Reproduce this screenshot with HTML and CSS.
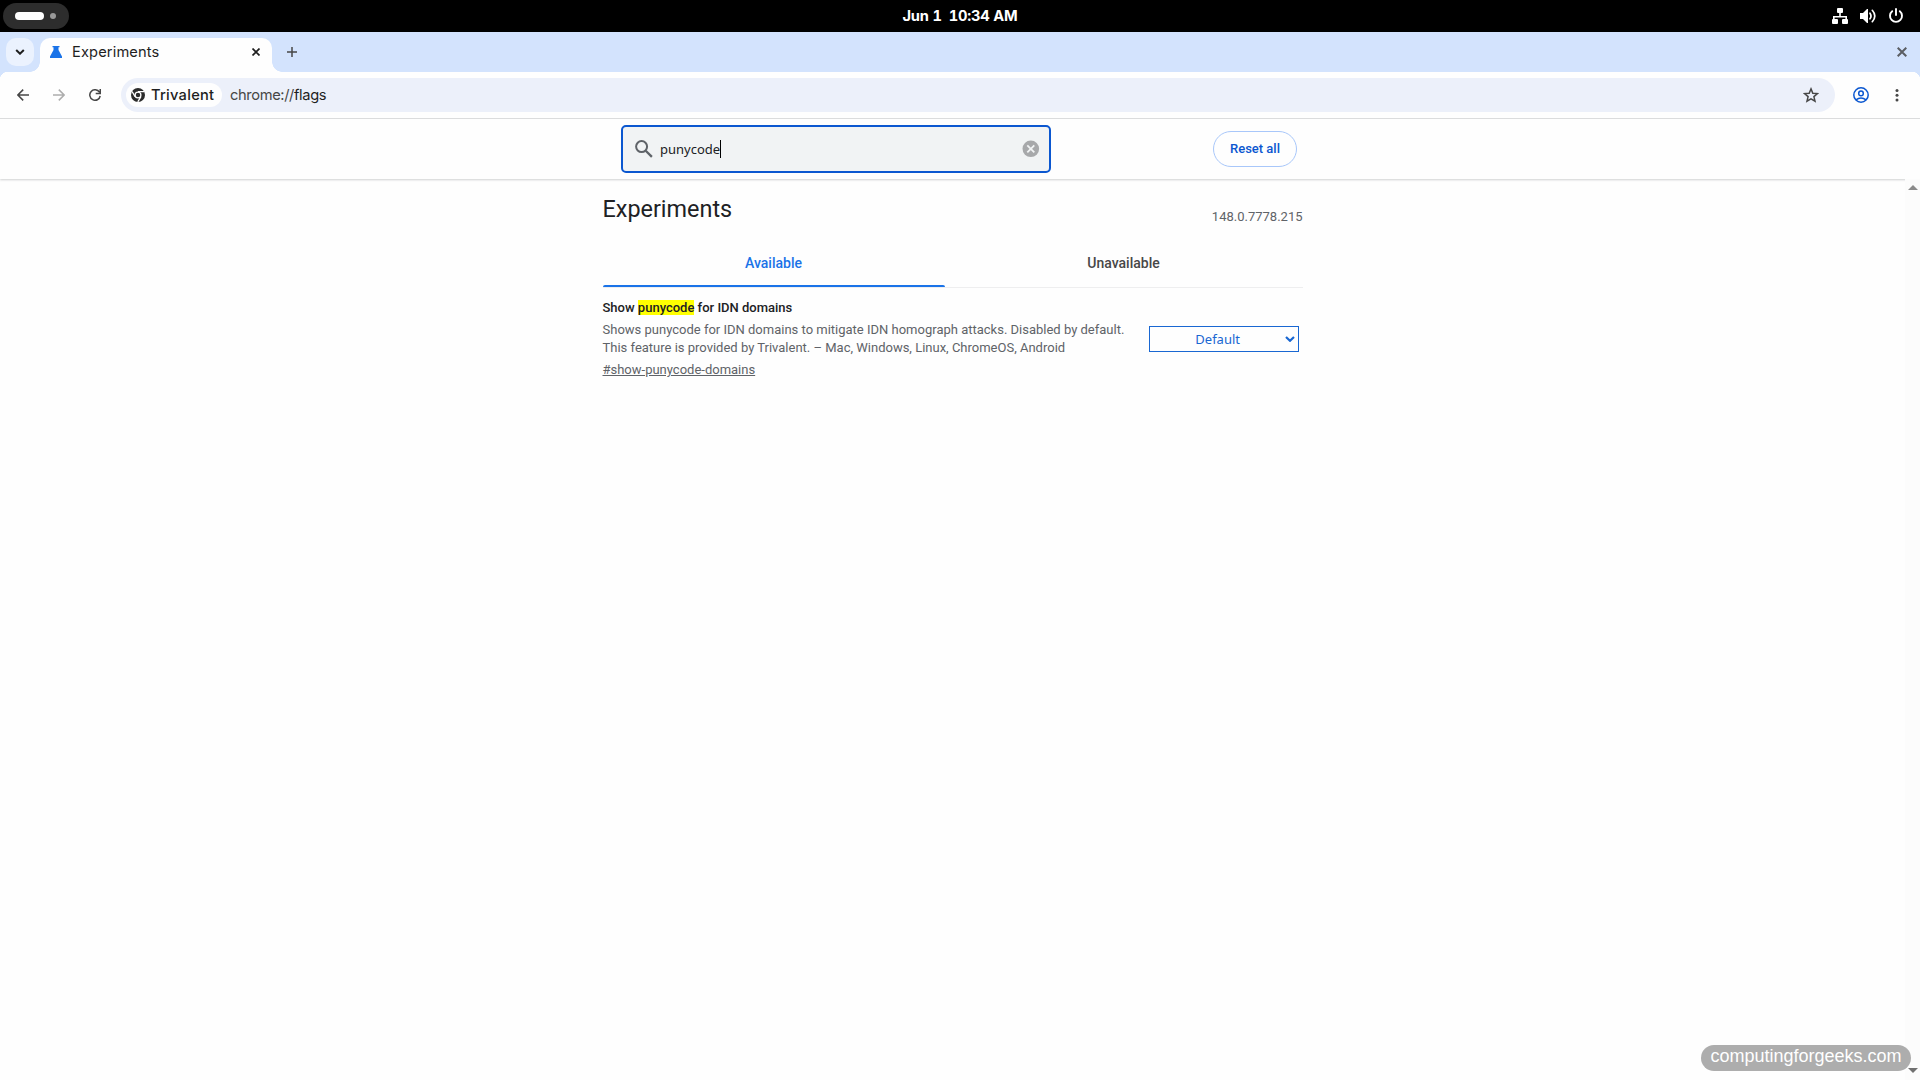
FILE: index.html
```html
<!DOCTYPE html>
<html lang="en">
<head>
<meta charset="utf-8">
<title>Experiments</title>
<link rel="stylesheet" href="styles.css">
</head>
<body>
<div class="desktop">
  <header class="panel">
    <div class="workspaces"><span class="ws-active"></span><span class="ws-dot"></span></div>
    <div class="clock">Jun 1&ensp;10:34 AM</div>
    <div class="status">
      <svg width="16" height="16" viewBox="0 0 16 16" fill="#fff"><rect x="5" y="0" width="6" height="5" rx="1"/><path d="M7.200 4h1.600v4H15v3h-1.600V9.600H2.600V11H1V8h6.200z"/><rect x="0" y="11" width="6" height="5" rx="1"/><rect x="10" y="11" width="6" height="5" rx="1"/></svg>
      <svg width="16" height="16" viewBox="0 0 16 16"><path d="M0 5h3l4-4h1v14H7l-4-4H0z" fill="#fff"/><path d="M10 5.200q2 2.800 0 5.600M12.300 2.300q5 5.700 0 11.400" fill="none" stroke="#fff" stroke-width="1.700" stroke-linecap="round"/></svg>
      <svg width="16" height="16" viewBox="0 0 16 16" fill="none" stroke="#fff" stroke-width="1.900" stroke-linecap="round"><path d="M4.200 3.200a6 6 0 1 0 7.600 0M8 1v6"/></svg>
    </div>
  </header>

  <div class="tabstrip">
    <button class="tab-search"><svg width="10" height="6" viewBox="0 0 10 6"><path d="M1.200 1L5 4.700 8.800 1" fill="none" stroke="#1f1f1f" stroke-width="2"/></svg></button>
    <div class="tab">
      <svg class="flask" width="12" height="12" viewBox="0 0 12 12"><path d="M2.500 0h7v1.300H8.500V4L12 10.500V12H0v-1.500L3.500 4V1.300h-1z" fill="#1a73e8"/></svg>
      <span class="tab-title">Experiments</span>
      <svg width="8" height="8" viewBox="0 0 8 8"><path d="M.5.5l7 7M7.500.5l-7 7" stroke="#1f1f1f" stroke-width="1.700"/></svg>
    </div>
    <svg class="new-tab" width="10" height="10" viewBox="0 0 10 10"><path d="M5 0v10M0 5h10" stroke="#474747" stroke-width="1.500"/></svg>
    <svg class="win-close" width="10" height="10" viewBox="0 0 10 10"><path d="M.7.700l8.600 8.600M9.300.700L.7 9.300" stroke="#5b5e63" stroke-width="2"/></svg>
  </div>

  <div class="toolbar">
    <svg class="nav" width="12" height="12" viewBox="0 0 12 12"><path d="M6.200.6L.9 6l5.300 5.400M1 6h11" fill="none" stroke="#474747" stroke-width="1.500"/></svg>
    <svg class="nav" width="12" height="12" viewBox="0 0 12 12"><path d="M5.800.6L11.100 6l-5.300 5.400M11 6H0" fill="none" stroke="#adadad" stroke-width="1.500"/></svg>
    <svg class="nav" width="12" height="12" viewBox="0 0 12 12"><path d="M11.200 7A5.250 5.250 0 1 1 10.500 3.200M11.250 0v4.500H6.700" fill="none" stroke="#474747" stroke-width="1.500"/></svg>
    <div class="omnibox">
      <div class="chip">
        <svg width="14" height="14" viewBox="0 0 14 14"><circle cx="7" cy="7" r="7" fill="#2b2b2b"/><circle cx="7" cy="7" r="2.900" fill="none" stroke="#fff" stroke-width="1.300"/><path d="M7 3.700h6.200M9.900 8.700L6.800 13.900M4.100 8.700L1.100 3.500" stroke="#fff" stroke-width="1.300"/></svg>
        <span>Trivalent</span>
      </div>
      <div class="url">chrome://<b>flags</b></div>
      <svg class="star" width="16" height="16" viewBox="0 0 16 16"><path d="M8 1.900l1.800 4.300 4.700.4-3.600 3 1.100 4.600-4-2.400-4 2.400 1.100-4.600-3.600-3 4.700-.4z" fill="none" stroke="#474747" stroke-width="1.500"/></svg>
    </div>
    <svg class="profile" width="16" height="16" viewBox="0 0 16 16" fill="none" stroke="#0b57d0" stroke-width="1.500"><circle cx="8" cy="8" r="7.200"/><circle cx="8" cy="6.400" r="2.300"/><path d="M2.900 12.800q5.100-3.600 10.200 0"/></svg>
    <svg class="menu" width="4" height="14" viewBox="0 0 4 14" fill="#474747"><circle cx="2" cy="2.500" r="1.500"/><circle cx="2" cy="7.200" r="1.500"/><circle cx="2" cy="12" r="1.500"/></svg>
  </div>

  <div class="page">
    <div class="searchbar">
      <div class="search">
        <svg width="18" height="18" viewBox="0 0 18 18" fill="none" stroke="#5f6368" stroke-width="2"><circle cx="6.600" cy="6.600" r="5.500"/><path d="M10.700 10.700l6.200 6.200" stroke-width="2.300"/></svg>
        <span class="query">punycode</span><span class="caret"></span>
        <svg class="clear" width="18" height="18" viewBox="0 0 18 18"><circle cx="8.800" cy="8.800" r="8.300" fill="#a7a8aa"/><path d="M5.300 5.300l7 7M12.300 5.300l-7 7" stroke="#f1f3f4" stroke-width="1.800"/></svg>
      </div>
      <button class="reset">Reset all</button>
    </div>
    <div class="viewport">
      <main class="content">
        <div class="heading"><h1>Experiments</h1><span class="version">148.0.7778.215</span></div>
        <div class="tabs"><div class="tab-label active">Available</div><div class="tab-label">Unavailable</div></div>
        <section class="experiment">
          <div class="details">
            <h2>Show <mark>punycode</mark> for IDN domains</h2>
            <p>Shows punycode for IDN domains to mitigate IDN homograph attacks. Disabled by default.<br>This feature is provided by Trivalent. – Mac, Windows, Linux, ChromeOS, Android</p>
            <a class="permalink">#show-punycode-domains</a>
          </div>
          <div class="select"><span>Default</span><svg width="10" height="6" viewBox="0 0 10 6"><path d="M1 1l4 3.800L9 1" fill="none" stroke="#1967d2" stroke-width="2.200"/></svg></div>
        </section>
      </main>
      <div class="scrollbar"><i class="up"></i><i class="down"></i></div>
    </div>
  </div>

  <svg class="watermark" width="1920" height="1080" viewBox="0 0 1920 1080">
    <defs>
      <text id="mark" transform="translate(28.500 94.600) rotate(-35)" textLength="321">computingforgeeks.com</text>
      <g id="column"><use href="#mark"/><use href="#mark" y="178"/><use href="#mark" y="356"/><use href="#mark" y="534"/><use href="#mark" y="712"/><use href="#mark" y="890"/><use href="#mark" y="1068"/></g>
    </defs>
    <use href="#column"/><use href="#column" x="471"/><use href="#column" x="942"/><use href="#column" x="1413"/>
  </svg>
  <div class="site-badge">computingforgeeks.com</div>
</div>
</body>
</html>
```
FILE: styles.css
```css
* { box-sizing: border-box; }
body { margin: 0; }
svg { display: block; flex: none; }
button { padding: 0; border: 0; }
.desktop { position: relative; width: 1920px; height: 1080px; overflow: hidden; display: flex; flex-direction: column; background: #fefefe; font-family: Roboto, sans-serif; color: #202124; }

.panel { height: 32px; background: #000; display: grid; grid-template-columns: 1fr auto 1fr; align-items: center; color: #fff; }
.workspaces { margin-left: 3px; width: 66px; height: 26px; border-radius: 13px; background: #2d2d2d; display: flex; align-items: center; padding-left: 12px; gap: 6px; }
.ws-active { width: 29px; height: 8px; border-radius: 4px; background: #fff; }
.ws-dot { width: 6px; height: 6px; border-radius: 3px; background: #999; }
.clock { font: 700 14.670px Inter, sans-serif; font-variant-numeric: tabular-nums; letter-spacing: -.2px; white-space: pre; }
.status { display: flex; justify-content: flex-end; gap: 12px; padding-right: 16px; }

.tabstrip { height: 40px; background: #d3e3fd; display: flex; align-items: center; }
.tab-search { margin-left: 6px; width: 28px; height: 28px; border-radius: 10px; background: #ebf2fe; display: flex; align-items: center; justify-content: center; }
.tab { position: relative; align-self: flex-end; margin-left: 6px; width: 232px; height: 34px; border-radius: 10px 10px 0 0; background: #fefefe; display: flex; align-items: center; padding: 0 12px 6px 10px; }
.tab::before, .tab::after { content: ""; position: absolute; bottom: 0; width: 10px; height: 10px; }
.tab::before { left: -10px; background: radial-gradient(circle at 0 0, transparent 9.500px, #fefefe 10px); }
.tab::after { right: -10px; background: radial-gradient(circle at 100% 0, transparent 9.500px, #fefefe 10px); }
.tab-title { flex: 1; margin-left: 10px; font: 14.670px/20px Inter, sans-serif; letter-spacing: .13px; color: #1f1f1f; }
.new-tab { margin-left: 15px; }
.win-close { margin-left: auto; margin-right: 13px; }

.toolbar { height: 47px; border-bottom: 1px solid #dedfe0; display: flex; align-items: center; padding-left: 17px; background: radial-gradient(circle at 8px 8px, #fefefe 8px, #d3e3fd 8.500px) 0 0 / 8px 8px no-repeat, radial-gradient(circle at 0 8px, #fefefe 8px, #d3e3fd 8.500px) 100% 0 / 8px 8px no-repeat, #fefefe; }
.nav { margin-right: 24px; }
.omnibox { margin-left: -4px; width: 1714px; height: 34px; border-radius: 17px; background: #ecf0fa; display: flex; align-items: center; font: 14.670px/20px Inter, sans-serif; color: #474747; }
.chip { margin-left: 5px; width: 96px; height: 24px; border-radius: 12px; background: #fefefe; display: flex; align-items: center; gap: 6px; padding-left: 5px; color: #1f1f1f; font-weight: 500; letter-spacing: .25px; white-space: nowrap; }
.url { margin-left: 8px; letter-spacing: -.36px; }
.url b { font-weight: 400; color: #1f1f1f; }
.star { margin-left: auto; margin-right: 16px; }
.profile { margin-left: 18px; }
.menu { margin-left: 26px; }

.page { flex: 1; display: flex; flex-direction: column; }
.searchbar { height: 60px; position: relative; display: flex; align-items: center; padding-left: 621px; box-shadow: 0 1px 2px rgba(60, 64, 67, .24); }
.search { width: 430px; height: 48px; border: 2px solid #0b57d0; border-radius: 5px; background: #f1f3f4; display: flex; align-items: center; padding: 0 9px 0 12px; }
.query { margin-left: 7px; font: 13px/18px "Noto Sans", sans-serif; }
.caret { width: 1px; height: 18px; background: #000; }
.clear { margin-left: auto; }
.reset { margin-left: 162px; width: 84px; height: 36px; padding-bottom: 2px; border: 1px solid #a8c7fa; border-radius: 18px; background: #fefefe; color: #0b57d0; font: 500 13px Roboto, sans-serif; }
.viewport { flex: 1; display: flex; justify-content: space-between; }
.content { margin-left: 602.5px; width: 700px; }
.heading { display: flex; justify-content: space-between; height: 69px; }
h1 { margin: 14px 0 0; font: 400 23.400px/32px Roboto, sans-serif; }
.version { margin-top: 29px; font-size: 13px; line-height: 18px; color: #5f6368; }
.tabs { display: flex; height: 40px; border-bottom: 1px solid #eeeeef; }
.tab-label { flex: 1; position: relative; padding-right: 8px; text-align: center; font: 500 14px/31px Roboto, sans-serif; color: #474747; }
.active { color: #1a73e8; }
.active::after { content: ""; position: absolute; left: 0; right: 8px; bottom: 0; height: 2px; border-radius: 2px 2px 0 0; background: #1a73e8; }
.experiment { display: flex; margin-top: 12px; }
.details { width: 546.5px; font-size: 13px; line-height: 18px; color: #5f6368; white-space: nowrap; }
h2 { margin: 0; font: 500 13px/15px Roboto, sans-serif; color: #202124; }
mark { background: #ff0; color: #202124; }
p { margin: 6px 0 4px; }
.permalink { text-decoration: underline; }
.select { margin-top: 26px; width: 150px; height: 26px; border: 1px solid #1967d2; display: flex; align-items: center; justify-content: flex-end; gap: 45px; padding-right: 3px; color: #1967d2; font: 13px "Noto Sans", sans-serif; }
.scrollbar { position: relative; width: 15px; background: #fcfcfc; display: flex; flex-direction: column; justify-content: space-between; align-items: center; padding: 6px 0 7px; }
.up, .down { border: 5px solid transparent; }
.up { border-top: 0; border-bottom: 5px solid #8b8b8b; }
.down { border-bottom: 0; border-top: 5px solid #707070; }
.watermark { position: absolute; left: 0; top: 0; pointer-events: none; fill: rgba(128, 128, 128, .024); font: 30px "Liberation Sans", sans-serif; }
.site-badge { position: absolute; left: 1701px; top: 1045px; width: 210px; height: 26px; border-radius: 13px; background: #adadad; color: #fff; font: 18px/22px "Liberation Sans", sans-serif; text-align: center; }
```
